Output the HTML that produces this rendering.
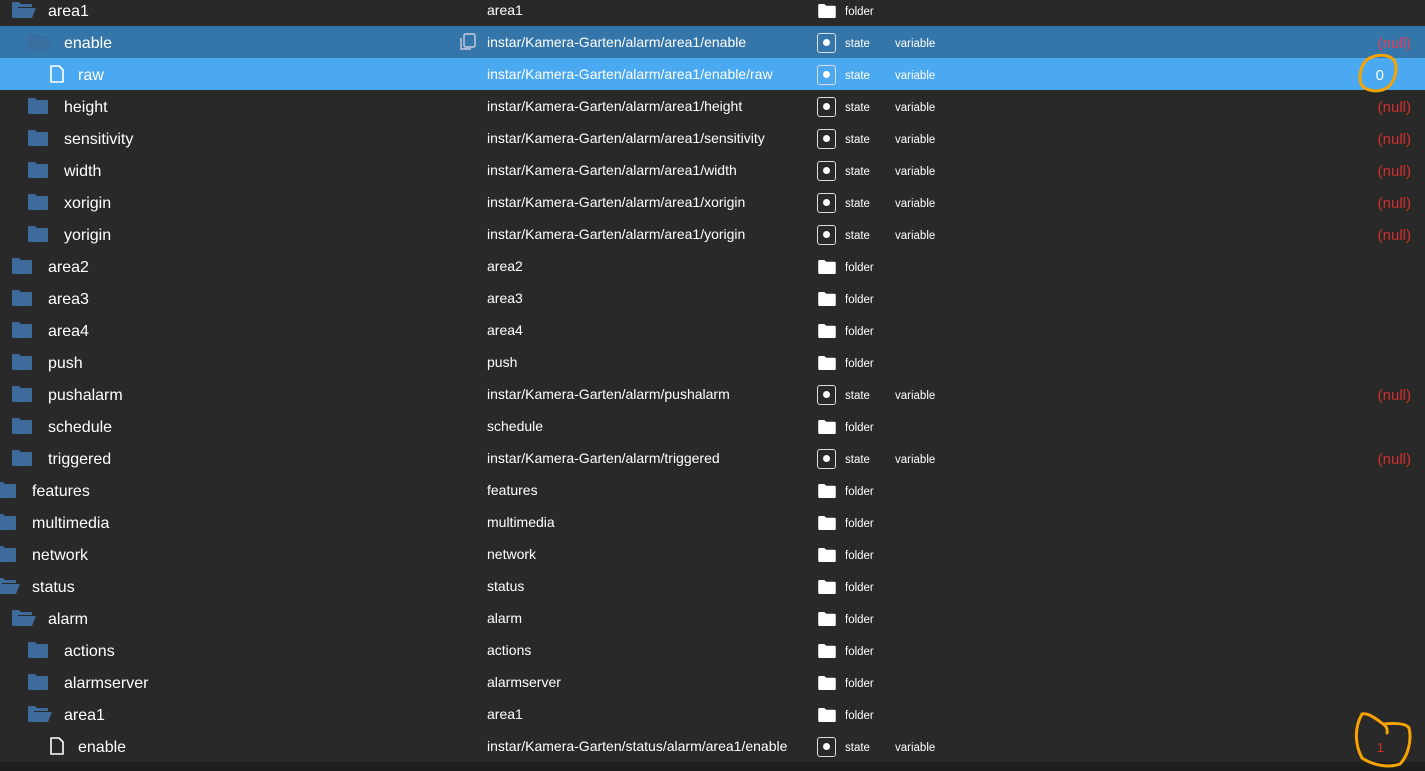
<!DOCTYPE html>
<html><head><meta charset="utf-8"><style>
body{margin:0;width:1425px;height:771px;background:#292929;overflow:hidden;font-family:"Liberation Sans",sans-serif;position:relative}
.r{position:absolute;left:0;width:1425px;height:32px;line-height:36px;color:#fff}
.r svg{position:absolute}
.n{position:absolute;font-size:16px}
.p{position:absolute;left:487px;font-size:14px;top:-2px}
.t{position:absolute;left:845px;font-size:11.5px}
.v{position:absolute;left:895px;font-size:11.5px}
.val{position:absolute;right:14px;font-size:15px;color:#d32f2f}
.ti{position:absolute;left:817px;top:7px;width:19px;height:20px;border:1.6px solid #ddd;border-radius:3px;box-sizing:border-box}
.ti:after{content:"";position:absolute;left:4.5px;top:5px;width:7px;height:7px;border-radius:50%;background:#fff}
.fi{position:absolute;left:818px;top:10px}
</style></head><body>
<svg width="0" height="0" style="position:absolute"><defs>
<symbol id="fc" viewBox="0 0 20 16"><path d="M0 1.5Q0 0 1.5 0H7l2 2h9.5Q20 2 20 3.5V14.5Q20 16 18.5 16H1.5Q0 16 0 14.5Z" fill="#3d6b9b"/></symbol>
<symbol id="fo" viewBox="0 0 24 16"><path d="M0 1.5Q0 0 1.5 0H7l2 2h9.5Q20 2 20 3.5V5H6L2 16H1.5Q0 16 0 14.5Z" fill="#3d6b9b"/><path d="M5 6H24L20 16H1Z" fill="#3d6b9b"/></symbol>
<symbol id="fl" viewBox="0 0 14 18"><path d="M1 1H9L13 5V17H1Z" fill="none" stroke="#fff" stroke-width="1.6" stroke-linejoin="round"/></symbol>
<symbol id="wf" viewBox="0 0 20 16"><path d="M0 1.5Q0 0 1.5 0H7l2 2h9.5Q20 2 20 3.5V14.5Q20 16 18.5 16H1.5Q0 16 0 14.5Z" fill="#fff"/></symbol>
</defs></svg>

<div class="r" style="top:-6px"><svg style="left:12px;top:8px" width="24" height="16"><use href="#fo"/></svg><span class="n" style="left:48px">area1</span><span class="p">area1</span><svg class="fi" width="18" height="14"><use href="#wf"/></svg><span class="t">folder</span></div>
<div class="r" style="top:26px;background:#3476aa"><svg style="left:28px;top:8px;opacity:.6" width="24" height="16"><use href="#fo"/></svg><span class="n" style="left:64px">enable</span>
<svg style="left:459px;top:7px" width="18" height="18" viewBox="0 0 18 18"><rect x="5" y="1" width="11" height="13" rx="1.5" fill="none" stroke="#ccd" stroke-width="1.4"/><path d="M2 5V16H12" fill="none" stroke="#ccd" stroke-width="1.4"/></svg>
<span class="p">instar/Kamera-Garten/alarm/area1/enable</span><span class="ti"></span><span class="t">state</span><span class="v">variable</span><span class="val" style="color:#e0405a">(null)</span></div>
<div class="r" style="top:58px;background:#4aa9f1"><svg style="left:50px;top:7px" width="14" height="18"><use href="#fl"/></svg><span class="n" style="left:78px">raw</span><span class="p">instar/Kamera-Garten/alarm/area1/enable/raw</span><span class="ti"></span><span class="t">state</span><span class="v">variable</span><span class="val" style="color:#fff;right:41px">0</span></div>

<div class="r" style="top:90px"><svg style="left:28px;top:8px" width="20" height="16"><use href="#fc"/></svg><span class="n" style="left:64px">height</span><span class="p">instar/Kamera-Garten/alarm/area1/height</span><span class="ti"></span><span class="t">state</span><span class="v">variable</span><span class="val">(null)</span></div>
<div class="r" style="top:122px"><svg style="left:28px;top:8px" width="20" height="16"><use href="#fc"/></svg><span class="n" style="left:64px">sensitivity</span><span class="p">instar/Kamera-Garten/alarm/area1/sensitivity</span><span class="ti"></span><span class="t">state</span><span class="v">variable</span><span class="val">(null)</span></div>
<div class="r" style="top:154px"><svg style="left:28px;top:8px" width="20" height="16"><use href="#fc"/></svg><span class="n" style="left:64px">width</span><span class="p">instar/Kamera-Garten/alarm/area1/width</span><span class="ti"></span><span class="t">state</span><span class="v">variable</span><span class="val">(null)</span></div>
<div class="r" style="top:186px"><svg style="left:28px;top:8px" width="20" height="16"><use href="#fc"/></svg><span class="n" style="left:64px">xorigin</span><span class="p">instar/Kamera-Garten/alarm/area1/xorigin</span><span class="ti"></span><span class="t">state</span><span class="v">variable</span><span class="val">(null)</span></div>
<div class="r" style="top:218px"><svg style="left:28px;top:8px" width="20" height="16"><use href="#fc"/></svg><span class="n" style="left:64px">yorigin</span><span class="p">instar/Kamera-Garten/alarm/area1/yorigin</span><span class="ti"></span><span class="t">state</span><span class="v">variable</span><span class="val">(null)</span></div>
<div class="r" style="top:250px"><svg style="left:12px;top:8px" width="20" height="16"><use href="#fc"/></svg><span class="n" style="left:48px">area2</span><span class="p">area2</span><svg class="fi" width="18" height="14"><use href="#wf"/></svg><span class="t">folder</span></div>
<div class="r" style="top:282px"><svg style="left:12px;top:8px" width="20" height="16"><use href="#fc"/></svg><span class="n" style="left:48px">area3</span><span class="p">area3</span><svg class="fi" width="18" height="14"><use href="#wf"/></svg><span class="t">folder</span></div>
<div class="r" style="top:314px"><svg style="left:12px;top:8px" width="20" height="16"><use href="#fc"/></svg><span class="n" style="left:48px">area4</span><span class="p">area4</span><svg class="fi" width="18" height="14"><use href="#wf"/></svg><span class="t">folder</span></div>
<div class="r" style="top:346px"><svg style="left:12px;top:8px" width="20" height="16"><use href="#fc"/></svg><span class="n" style="left:48px">push</span><span class="p">push</span><svg class="fi" width="18" height="14"><use href="#wf"/></svg><span class="t">folder</span></div>
<div class="r" style="top:378px"><svg style="left:12px;top:8px" width="20" height="16"><use href="#fc"/></svg><span class="n" style="left:48px">pushalarm</span><span class="p">instar/Kamera-Garten/alarm/pushalarm</span><span class="ti"></span><span class="t">state</span><span class="v">variable</span><span class="val">(null)</span></div>
<div class="r" style="top:410px"><svg style="left:12px;top:8px" width="20" height="16"><use href="#fc"/></svg><span class="n" style="left:48px">schedule</span><span class="p">schedule</span><svg class="fi" width="18" height="14"><use href="#wf"/></svg><span class="t">folder</span></div>
<div class="r" style="top:442px"><svg style="left:12px;top:8px" width="20" height="16"><use href="#fc"/></svg><span class="n" style="left:48px">triggered</span><span class="p">instar/Kamera-Garten/alarm/triggered</span><span class="ti"></span><span class="t">state</span><span class="v">variable</span><span class="val">(null)</span></div>
<div class="r" style="top:474px"><svg style="left:-4px;top:8px" width="20" height="16"><use href="#fc"/></svg><span class="n" style="left:32px">features</span><span class="p">features</span><svg class="fi" width="18" height="14"><use href="#wf"/></svg><span class="t">folder</span></div>
<div class="r" style="top:506px"><svg style="left:-4px;top:8px" width="20" height="16"><use href="#fc"/></svg><span class="n" style="left:32px">multimedia</span><span class="p">multimedia</span><svg class="fi" width="18" height="14"><use href="#wf"/></svg><span class="t">folder</span></div>
<div class="r" style="top:538px"><svg style="left:-4px;top:8px" width="20" height="16"><use href="#fc"/></svg><span class="n" style="left:32px">network</span><span class="p">network</span><svg class="fi" width="18" height="14"><use href="#wf"/></svg><span class="t">folder</span></div>
<div class="r" style="top:570px"><svg style="left:-4px;top:8px" width="24" height="16"><use href="#fo"/></svg><span class="n" style="left:32px">status</span><span class="p">status</span><svg class="fi" width="18" height="14"><use href="#wf"/></svg><span class="t">folder</span></div>
<div class="r" style="top:602px"><svg style="left:12px;top:8px" width="24" height="16"><use href="#fo"/></svg><span class="n" style="left:48px">alarm</span><span class="p">alarm</span><svg class="fi" width="18" height="14"><use href="#wf"/></svg><span class="t">folder</span></div>
<div class="r" style="top:634px"><svg style="left:28px;top:8px" width="20" height="16"><use href="#fc"/></svg><span class="n" style="left:64px">actions</span><span class="p">actions</span><svg class="fi" width="18" height="14"><use href="#wf"/></svg><span class="t">folder</span></div>
<div class="r" style="top:666px"><svg style="left:28px;top:8px" width="20" height="16"><use href="#fc"/></svg><span class="n" style="left:64px">alarmserver</span><span class="p">alarmserver</span><svg class="fi" width="18" height="14"><use href="#wf"/></svg><span class="t">folder</span></div>
<div class="r" style="top:698px"><svg style="left:28px;top:8px" width="24" height="16"><use href="#fo"/></svg><span class="n" style="left:64px">area1</span><span class="p">area1</span><svg class="fi" width="18" height="14"><use href="#wf"/></svg><span class="t">folder</span></div>
<div class="r" style="top:730px"><svg style="left:50px;top:7px" width="14" height="18"><use href="#fl"/></svg><span class="n" style="left:78px">enable</span><span class="p">instar/Kamera-Garten/status/alarm/area1/enable</span><span class="ti"></span><span class="t">state</span><span class="v">variable</span><span class="val" style="right:41px;font-size:13px">1</span></div>
<div style="position:absolute;left:0;top:762px;width:1425px;height:9px;background:#1e1e1e"></div>

<svg style="position:absolute;left:0;top:0" width="1425" height="771">
<path d="M1372 57C1362 60 1358 74 1361 84C1366 92 1380 93 1388 87C1396 80 1398 68 1394 60C1388 54 1378 54 1370 58" fill="none" stroke="#f5a300" stroke-width="3" stroke-linecap="round"/>
<path d="M1387 733C1388 728 1385 725 1383 724C1394 723 1406 723 1409 728C1412 740 1408 756 1400 764C1390 768 1374 766 1362 758C1355 745 1354 728 1362 714C1368 712 1378 720 1383 724" fill="none" stroke="#f5a300" stroke-width="3" stroke-linecap="round" stroke-linejoin="round"/>
</svg>
</body></html>
